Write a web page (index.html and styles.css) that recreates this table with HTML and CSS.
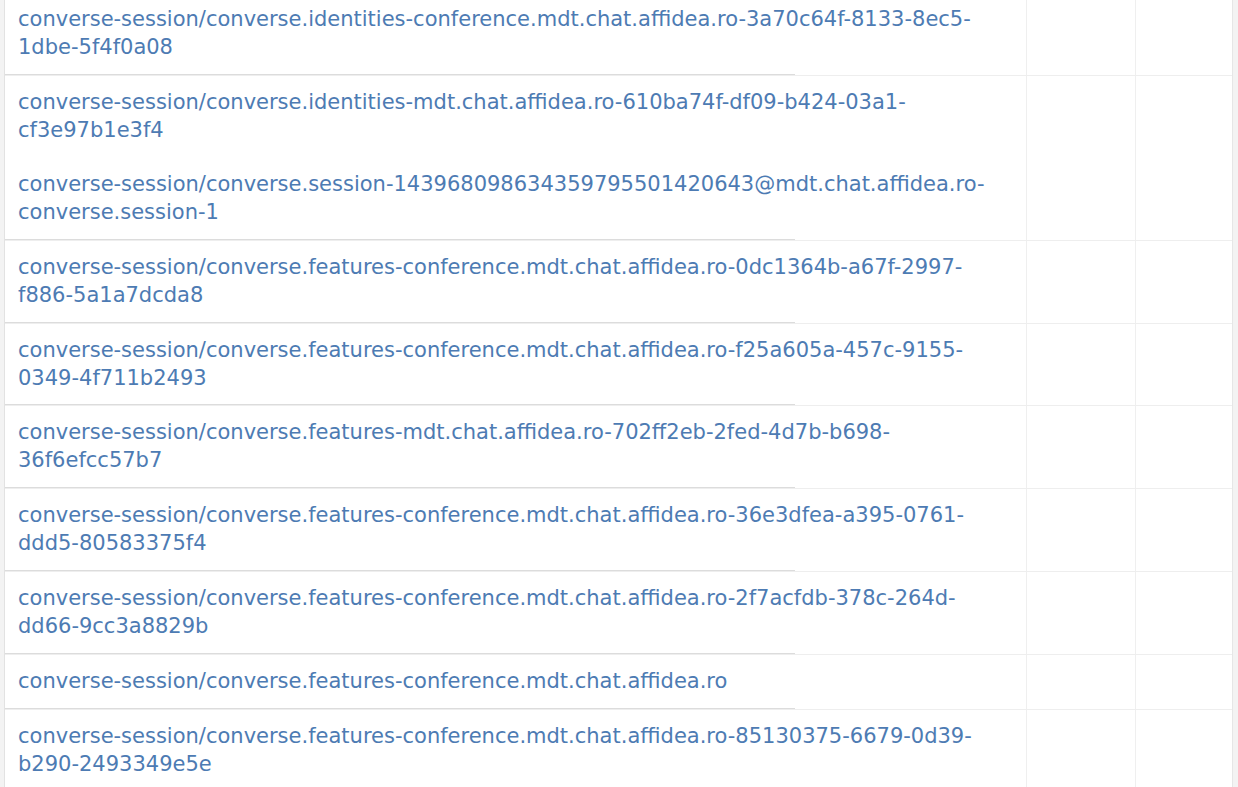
FILE: index.html
```html
<!DOCTYPE html>
<html>
<head>
<meta charset="utf-8">
<link rel="stylesheet" href="styles.css">
</head>
<body>
<div class="page">
  <div class="table">
    <div class="row">
      <div class="cell main">
        <a class="item">converse-session/converse.identities-conference.mdt.chat.affidea.ro-3a70c64f-8133-8ec5-<br>1dbe-5f4f0a08</a>
      </div>
      <div class="cell"></div>
      <div class="cell"></div>
    </div>
    <div class="row">
      <div class="cell main">
        <a class="item">converse-session/converse.identities-mdt.chat.affidea.ro-610ba74f-df09-b424-03a1-<br>cf3e97b1e3f4</a>
        <a class="item">converse-session/converse.session-143968098634359795501420643@mdt.chat.affidea.ro-<br>converse.session-1</a>
      </div>
      <div class="cell"></div>
      <div class="cell"></div>
    </div>
    <div class="row">
      <div class="cell main">
        <a class="item">converse-session/converse.features-conference.mdt.chat.affidea.ro-0dc1364b-a67f-2997-<br>f886-5a1a7dcda8</a>
      </div>
      <div class="cell"></div>
      <div class="cell"></div>
    </div>
    <div class="row">
      <div class="cell main">
        <a class="item">converse-session/converse.features-conference.mdt.chat.affidea.ro-f25a605a-457c-9155-<br>0349-4f711b2493</a>
      </div>
      <div class="cell"></div>
      <div class="cell"></div>
    </div>
    <div class="row">
      <div class="cell main">
        <a class="item">converse-session/converse.features-mdt.chat.affidea.ro-702ff2eb-2fed-4d7b-b698-<br>36f6efcc57b7</a>
      </div>
      <div class="cell"></div>
      <div class="cell"></div>
    </div>
    <div class="row">
      <div class="cell main">
        <a class="item">converse-session/converse.features-conference.mdt.chat.affidea.ro-36e3dfea-a395-0761-<br>ddd5-80583375f4</a>
      </div>
      <div class="cell"></div>
      <div class="cell"></div>
    </div>
    <div class="row">
      <div class="cell main">
        <a class="item">converse-session/converse.features-conference.mdt.chat.affidea.ro-2f7acfdb-378c-264d-<br>dd66-9cc3a8829b</a>
      </div>
      <div class="cell"></div>
      <div class="cell"></div>
    </div>
    <div class="row">
      <div class="cell main">
        <a class="item">converse-session/converse.features-conference.mdt.chat.affidea.ro</a>
      </div>
      <div class="cell"></div>
      <div class="cell"></div>
    </div>
    <div class="row">
      <div class="cell main">
        <a class="item">converse-session/converse.features-conference.mdt.chat.affidea.ro-85130375-6679-0d39-<br>b290-2493349e5e</a>
      </div>
      <div class="cell"></div>
      <div class="cell"></div>
    </div>
  </div>
</div>
</body>
</html>
```
FILE: styles.css
```css
html, body {
  margin: 0;
  padding: 0;
  height: 100%;
  overflow: hidden;
}
body {
  background: #f3f3f3;
  font-family: "DejaVu Sans", sans-serif;
}
.page {
  padding: 0 5px 0 4px;
  height: 100%;
}
.table {
  margin-top: -7px;
  background: #ffffff;
  border-left: 1px solid #e2e2e2;
  border-right: 1px solid #e6e6e6;
  min-height: calc(100% + 7px);
  display: flex;
  flex-direction: column;
}
.row {
  display: grid;
  grid-template-columns: 1022px 109px 1fr;
  border-bottom: 1px solid #eeeeee;
  background: linear-gradient(#dcdcdc, #dcdcdc) no-repeat left bottom / 790px 1px;
}
.row:last-child {
  flex: 1;
}
.cell {
  border-right: 1px solid #efefef;
}
.cell:last-child {
  border-right: none;
}
.cell.main {
  padding: 12px 20px 13.85px 13px;
  display: flex;
  flex-direction: column;
  gap: 26px;
}
.item {
  display: block;
  color: #4d7bb3;
  font-size: 21px;
  line-height: 28px;
  text-decoration: none;
  white-space: nowrap;
}
```
